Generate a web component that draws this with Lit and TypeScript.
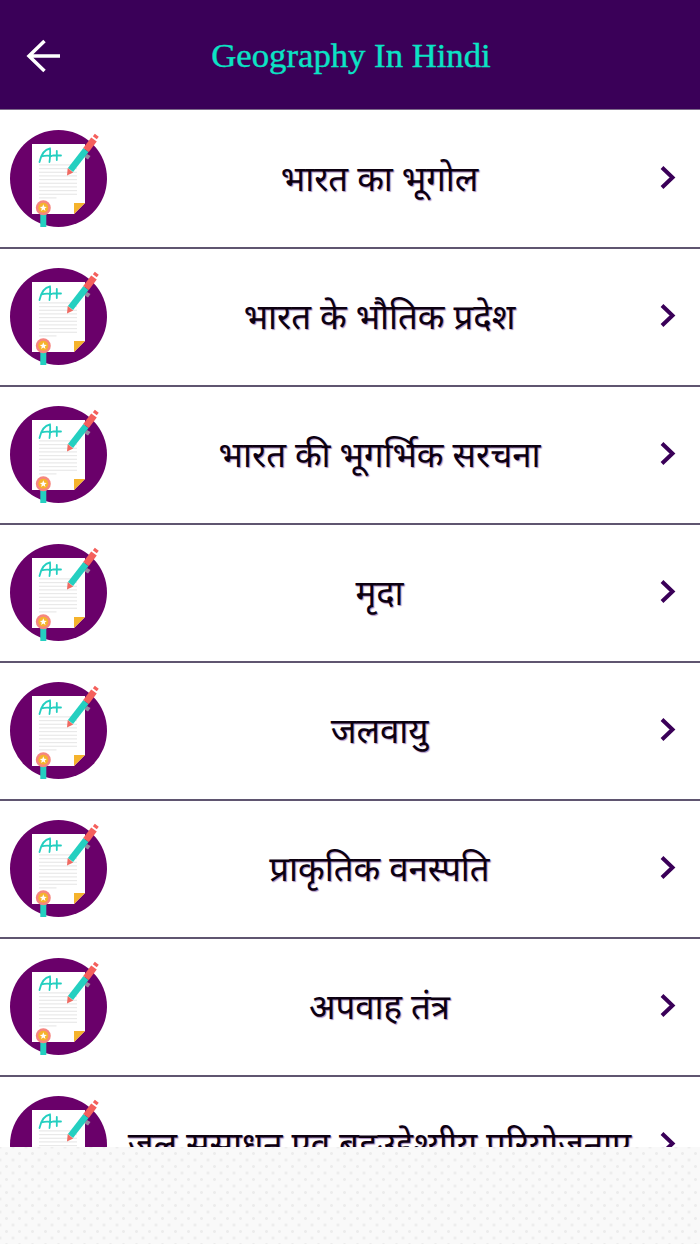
import { LitElement, html, css, svg } from "lit";
import { customElement } from "lit/decorators.js";

const TOPICS = [
  "भारत का भूगोल",
  "भारत के भौतिक प्रदेश",
  "भारत की भूगर्भिक सरचना",
  "मृदा",
  "जलवायु",
  "प्राकृतिक वनस्पति",
  "अपवाह तंत्र",
  "जल ससाधन एव बहुउद्देश्यीय परियोजनाए",
];

const ruleYs = [34.3, 38, 41.7, 45.3, 49, 52.7, 56.3, 60, 63.7];

const badge = html`<svg class="badge" viewBox="0 0 98 98" aria-hidden="true">
  <circle cx="48.5" cy="48.5" r="48.5" fill="#6a006a"></circle>
  <path d="M22 14H75V73L64 84H22Z" fill="#fff"></path>
  <path d="M64 73H75L64 84Z" fill="#f5b32c"></path>
  ${ruleYs.map(
    (y) => svg`<rect x="29" y=${y} width="38" height="1.2" fill="#e9e9e9"></rect>`
  )}
  <rect x="29" y="67.3" width="17.5" height="1.2" fill="#e9e9e9"></rect>
  <path d="M29.5 32C31 25 34.500 19.500 40 18.500C40.500 23 40 28 39.500 32M31.500 26.500C34.500 25.500 38 25.500 41.500 26M43 25.500H51M46.800 21V30" fill="none" stroke="#24cfc0" stroke-width="1.8" stroke-linecap="round"></path>
  <path d="M30.300 80H36.300V97H30.300Z" fill="#24cfc0"></path>
  <circle cx="33.300" cy="77.700" r="7.500" fill="#f6867f"></circle>
  <circle cx="33.300" cy="77.700" r="5" fill="#f5b32c"></circle>
  <path d="M33.300 74.300L34.300 76.700L36.800 76.900L34.800 78.500L35.500 81L33.300 79.600L31.100 81L31.800 78.500L29.800 76.900L32.300 76.700Z" fill="#fff"></path>
  <path d="M77 24L80.500 26L78 29.500L74 27Z" fill="#9a8aa0"></path>
  <path d="M60.500 40L76 20" stroke="#24cfc0" stroke-width="6.500" fill="none"></path>
  <path d="M57 45.500L57.700 38L63.200 42.400Z" fill="#ef6a62"></path>
  <path d="M76 20L84 9.500" stroke="#f4605c" stroke-width="7" fill="none"></path>
  <path d="M84.800 7.800L86.800 5.300" stroke="#f4605c" stroke-width="5" fill="none"></path>
</svg>`;

@customElement("app-root")
export class AppRoot extends LitElement {
  static styles = css`
    :host {
      display: block;
      width: 700px;
      height: 1244px;
      font-family: "Noto Sans", "Noto Sans Devanagari", "Lohit Devanagari", "Liberation Sans", sans-serif;
    }
    .page {
      display: flex;
      flex-direction: column;
      height: 100%;
      background: #fff;
      overflow: hidden;
    }
    .bar {
      flex: 0 0 110px;
      box-sizing: border-box;
      display: flex;
      align-items: center;
      padding: 2px 60px 0 26px;
      background: #3a0058;
      border-bottom: 1px solid #7d6a8a;
    }
    .back {
      flex: none;
      width: 36px;
      height: 36px;
      display: block;
    }
    .title {
      flex: 1;
      text-align: center;
      margin: 0;
      font-family: "Liberation Serif", serif;
      font-weight: 400;
      font-size: 34.7px;
      color: #0be3c5;
      -webkit-text-stroke: 0.4px #0be3c5;
    }
    .list {
      flex: 1;
      min-height: 0;
      overflow: hidden;
      padding-top: 1px;
    }
    .row {
      height: 138px;
      box-sizing: border-box;
      display: flex;
      align-items: center;
      padding: 0 23px 0 10px;
      border-bottom: 2px solid #5f5570;
    }
    .badge {
      flex: none;
      width: 98px;
      height: 98px;
    }
    .label {
      flex: 1;
      min-width: 0;
      text-align: center;
      font-size: 34.7px;
      line-height: 46px;
      white-space: nowrap;
      color: #0c0010;
      text-shadow: 1px 1px 1px #a98cc0;
      margin: 0 14px 0 8px;
      transform: translateY(-1px);
    }
    .chev {
      flex: none;
      width: 20px;
      height: 28px;
      display: block;
    }
    .foot {
      flex: 0 0 97px;
      background-color: #f9f9f9;
      background-image:
        radial-gradient(circle at 50% 50%, #ececec 0 1px, transparent 2px),
        radial-gradient(circle at 50% 50%, #ececec 0 1px, transparent 2px);
      background-size: 13px 13px;
      background-position: 0 0, 6.5px 6.5px;
    }
  `;

  render() {
    return html`<div class="page">
      <header class="bar">
        <svg class="back" viewBox="0 0 36 36" aria-hidden="true">
          <path d="M3 18H34M18.500 3L3 18L18.500 33" fill="none" stroke="#fff" stroke-width="3.500"></path>
        </svg>
        <h1 class="title">Geography In Hindi</h1>
      </header>
      <div class="list">
        ${TOPICS.map(
          (t) => html`<div class="row">
            ${badge}
            <div class="label">${t}</div>
            <svg class="chev" viewBox="0 0 20 28" aria-hidden="true">
              <path d="M5 2.500L15.500 12.500L5 22.500" fill="none" stroke="#3a0058" stroke-width="4"></path>
            </svg>
          </div>`
        )}
      </div>
      <div class="foot"></div>
    </div>`;
  }
}
